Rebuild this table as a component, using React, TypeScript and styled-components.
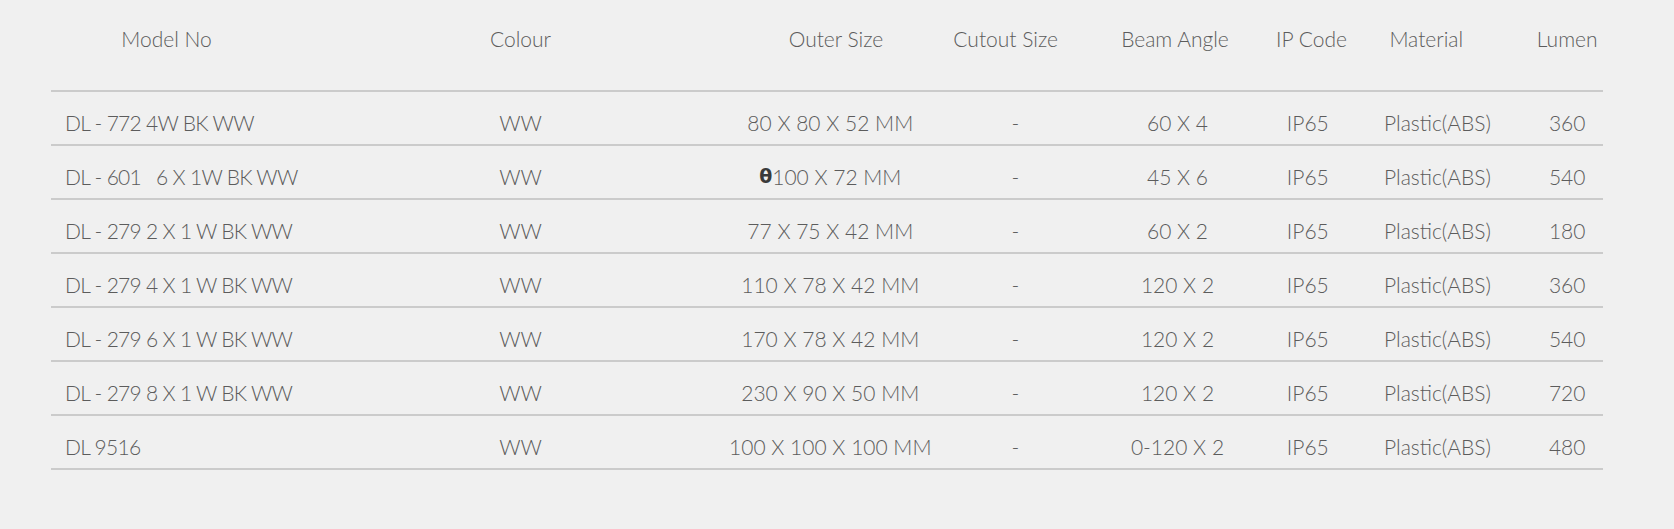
import styled, { createGlobalStyle } from 'styled-components'

type Column = {
	key: string
	label: string
	width: number
	headShift: number
	align: 'left' | 'center'
}

type Product = Record<string, string>

const COLUMNS: Column[] = [
	{ key: 'model', label: 'Model No', width: 277, headShift: -23, align: 'left' },
	{ key: 'colour', label: 'Colour', width: 385, headShift: 0, align: 'center' },
	{ key: 'outer', label: 'Outer Size', width: 234.6, headShift: 5.7, align: 'center' },
	{ key: 'cutout', label: 'Cutout Size', width: 135.4, headShift: -9.6, align: 'center' },
	{ key: 'beam', label: 'Beam Angle', width: 189, headShift: -2.5, align: 'center' },
	{ key: 'ip', label: 'IP Code', width: 71.6, headShift: 3.7, align: 'center' },
	{ key: 'material', label: 'Material', width: 187.8, headShift: -11.2, align: 'center' },
	{ key: 'lumen', label: 'Lumen', width: 71.6, headShift: 0, align: 'center' },
]

const TEMPLATE = COLUMNS.map((c) => `${c.width}px`).join(' ')

const PRODUCTS: Product[] = [
	{ model: 'DL - 772 4W BK WW', colour: 'WW', outer: '80 X 80 X 52 MM', cutout: '-', beam: '60 X 4', ip: 'IP65', material: 'Plastic(ABS)', lumen: '360' },
	{ model: 'DL - 601\u00a0\u00a0\u00a06 X 1W BK WW', colour: 'WW', outer: 'θ100 X 72 MM', cutout: '-', beam: '45 X 6', ip: 'IP65', material: 'Plastic(ABS)', lumen: '540' },
	{ model: 'DL - 279 2 X 1 W BK WW', colour: 'WW', outer: '77 X 75 X 42 MM', cutout: '-', beam: '60 X 2', ip: 'IP65', material: 'Plastic(ABS)', lumen: '180' },
	{ model: 'DL - 279 4 X 1 W BK WW', colour: 'WW', outer: '110 X 78 X 42 MM', cutout: '-', beam: '120 X 2', ip: 'IP65', material: 'Plastic(ABS)', lumen: '360' },
	{ model: 'DL - 279 6 X 1 W BK WW', colour: 'WW', outer: '170 X 78 X 42 MM', cutout: '-', beam: '120 X 2', ip: 'IP65', material: 'Plastic(ABS)', lumen: '540' },
	{ model: 'DL - 279 8 X 1 W BK WW', colour: 'WW', outer: '230 X 90 X 50 MM', cutout: '-', beam: '120 X 2', ip: 'IP65', material: 'Plastic(ABS)', lumen: '720' },
	{ model: 'DL 9516', colour: 'WW', outer: '100 X 100 X 100 MM', cutout: '-', beam: '0-120 X 2', ip: 'IP65', material: 'Plastic(ABS)', lumen: '480' },
]

// the diameter sign renders from a fallback font in the original, heavier than the rest
const renderValue = (value: string) => {
	if (value.startsWith('θ')) {
		return (
			<>
				<Theta>θ</Theta>
				{value.slice(1)}
			</>
		)
	}
	return value
}

const App = () => {
	return (
		<>
			<GlobalStyle />
			<Page>
				<Table>
					<HeadRow>
						{COLUMNS.map((col) => (
							<HeadCell key={col.key} $shift={col.headShift}>
								{col.label}
							</HeadCell>
						))}
					</HeadRow>
					{PRODUCTS.map((p) => (
						<BodyRow key={p.model}>
							{COLUMNS.map((col) => (
								<BodyCell key={col.key} $align={col.align}>
									{renderValue(p[col.key])}
								</BodyCell>
							))}
						</BodyRow>
					))}
				</Table>
			</Page>
		</>
	)
}

export default App

const GlobalStyle = createGlobalStyle`
	html, body {
		margin: 0;
		padding: 0;
		background: #f0f0f0;
	}
	body {
		font-family: Lato, 'Open Sans', sans-serif;
		-webkit-font-smoothing: antialiased;
	}
`

const Page = styled.div`
	width: 1674px;
	height: 529px;
	background: #f0f0f0;
	padding-left: 51px;
	box-sizing: border-box;
`

const Table = styled.div`
	width: 1552px;
	display: flex;
	flex-direction: column;
`

const HeadRow = styled.div`
	display: grid;
	grid-template-columns: ${TEMPLATE};
	height: 92px;
	padding-top: 26px;
	box-sizing: border-box;
	border-bottom: 2px solid #cbcbcb;
`

const BodyRow = styled.div`
	display: grid;
	grid-template-columns: ${TEMPLATE};
	height: 54px;
	padding-top: 18px;
	box-sizing: border-box;
	border-bottom: 2px solid #cbcbcb;
`

const HeadCell = styled.div<{ $shift: number }>`
	display: flex;
	justify-content: center;
	white-space: nowrap;
	font-size: 21px;
	line-height: 25px;
	font-weight: 300;
	color: #5c5c5c;
	padding-left: ${({ $shift }) => Math.max(0, $shift * 2)}px;
	padding-right: ${({ $shift }) => Math.max(0, -$shift * 2)}px;
`

const BodyCell = styled.div<{ $align: 'left' | 'center' }>`
	display: flex;
	justify-content: ${({ $align }) => ($align === 'left' ? 'flex-start' : 'center')};
	padding-left: ${({ $align }) => ($align === 'left' ? '14px' : '0')};
	letter-spacing: ${({ $align }) => ($align === 'left' ? '-0.7px' : '0')};
	white-space: pre;
	font-size: 21px;
	line-height: 25px;
	font-weight: 300;
	color: #5c5c5c;
`

const Theta = styled.span`
	font-family: 'DejaVu Sans', sans-serif;
	font-weight: 700;
	font-size: 19px;
	color: #3a3a3a;
`
